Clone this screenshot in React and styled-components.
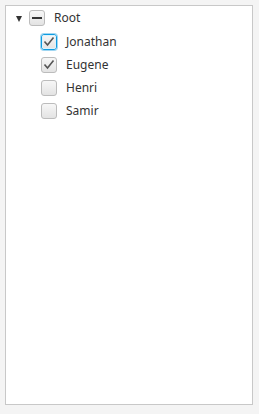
import React from "react";
import styled, { createGlobalStyle, css } from "styled-components";

const Global = createGlobalStyle`
  html, body { margin: 0; padding: 0; background: #f4f4f4; }
  body { font-family: "Noto Sans", "Open Sans", sans-serif; }
`;

const Page = styled.div`
  width: 259px;
  height: 414px;
  padding: 5px 6px 9px 5px;
  box-sizing: border-box;
  background: #f4f4f4;
`;

const TreePanel = styled.div`
  height: 100%;
  box-sizing: border-box;
  border: 1px solid #c8c8c8;
  background: #ffffff;
  display: flex;
  flex-direction: column;
`;

const Row = styled.div`
  display: flex;
  align-items: center;
  height: ${(p) => (p.$first ? 24 : 23)}px;
  padding-left: ${(p) => p.$indent}px;
  box-sizing: border-box;
`;

const Arrow = styled.span`
  width: 0;
  height: 0;
  border-left: 3.5px solid transparent;
  border-right: 3.5px solid transparent;
  border-top: 6px solid #333;
  margin-right: 7px;
  margin-top: 1px;
`;

const Box = styled.span`
  position: relative;
  width: 16px;
  height: 16px;
  box-sizing: border-box;
  border-radius: 3px;
  border: 1px solid #bcbcbc;
  background: linear-gradient(#f7f7f7, #e3e3e3);
  display: flex;
  align-items: center;
  justify-content: center;
  flex-shrink: 0;
  ${(p) =>
    p.$focused &&
    css`
      border-color: #0f9be0;
      box-shadow: 0 0 0 1px #9fd6f2;
      &::after {
        content: "";
        position: absolute;
        inset: 0;
        border-radius: 2px;
        border: 1px solid #dcf2fc;
      }
    `}
`;

const Dash = styled.span`
  width: 10px;
  height: 2px;
  background: #333;
`;

const Label = styled.span`
  margin-left: 9px;
  font-size: 12px;
  color: #333;
  line-height: 16px;
`;

const Check = () => (
  <svg width="12" height="11" viewBox="0 0 12 11" style={{ position: "relative", zIndex: 1 }}>
    <path d="M1.5 5.5 L4.5 9 L10.5 1.5" fill="none" stroke="#555" strokeWidth="1.6" />
  </svg>
);

const children = [
  { name: "Jonathan", checked: true, focused: true },
  { name: "Eugene", checked: true },
  { name: "Henri" },
  { name: "Samir" },
];

export default function App() {
  return (
    <>
      <Global />
      <Page>
        <TreePanel>
          <Row $first $indent={10}>
            <Arrow />
            <Box>
              <Dash />
            </Box>
            <Label>Root</Label>
          </Row>
          {children.map((c) => (
            <Row key={c.name} $indent={35}>
              <Box $focused={c.focused}>{c.checked && <Check />}</Box>
              <Label>{c.name}</Label>
            </Row>
          ))}
        </TreePanel>
      </Page>
    </>
  );
}
